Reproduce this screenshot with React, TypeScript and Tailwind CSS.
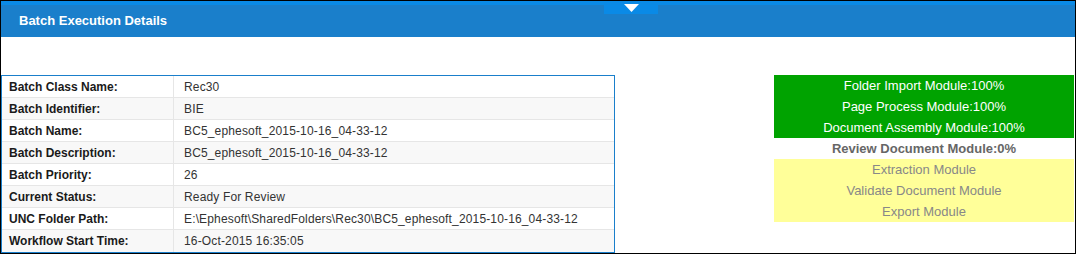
import React from 'react';

const details: [string, string][] = [
  ['Batch Class Name:', 'Rec30'],
  ['Batch Identifier:', 'BIE'],
  ['Batch Name:', 'BC5_ephesoft_2015-10-16_04-33-12'],
  ['Batch Description:', 'BC5_ephesoft_2015-10-16_04-33-12'],
  ['Batch Priority:', '26'],
  ['Current Status:', 'Ready For Review'],
  ['UNC Folder Path:', 'E:\\Ephesoft\\SharedFolders\\Rec30\\BC5_ephesoft_2015-10-16_04-33-12'],
  ['Workflow Start Time:', '16-Oct-2015 16:35:05'],
];

const done = ['Folder Import Module:100%', 'Page Process Module:100%', 'Document Assembly Module:100%'];
const pending = ['Extraction Module', 'Validate Document Module', 'Export Module'];

export default function App() {
  return (
    <div className="w-[1076px] h-[254px] border border-black bg-white flex flex-col font-['Liberation_Sans',Arial,sans-serif] overflow-hidden">
      <div className="relative h-[36px] shrink-0 bg-[#1a7fcb] border-t-4 border-[#0a8ae6] flex items-center pl-[18px]">
        <span className="text-white text-[13px] font-bold">Batch Execution Details</span>
        <div className="absolute left-[603px] -top-[4px] w-[54px] h-[13px] bg-[#0a8ae6] flex justify-center pt-[3px]">
          <svg width="15" height="8" viewBox="0 0 15 8">
            <polygon points="0,0 15,0 7.5,8" fill="#fff" />
          </svg>
        </div>
      </div>

      <div className="flex items-start pt-[38px]">
        <div className="w-[614px] border border-[#1a7fcb] text-[12px]">
          {details.map(([label, value], i) => (
            <div
              key={label}
              className={`flex h-[22px] ${i < details.length - 1 ? 'border-b border-[#e6e6e6]' : ''} ${i % 2 === 1 ? 'bg-[#f8f8f8]' : 'bg-white'}`}
            >
              <div className="w-[172px] shrink-0 border-r border-[#e6e6e6] pl-[7px] flex items-center font-bold text-[#1a1a1a]">
                {label}
              </div>
              <div className="pl-[10px] flex items-center text-[#333] tracking-[0.15px]">{value}</div>
            </div>
          ))}
        </div>

        <div className="ml-[159px] w-[300px] text-[13px] text-center">
          {done.map((m) => (
            <div key={m} className="h-[21px] leading-[21px] bg-[#00a300] text-white">
              {m}
            </div>
          ))}
          <div className="h-[21px] leading-[21px] font-bold text-[#666]">Review Document Module:0%</div>
          {pending.map((m) => (
            <div key={m} className="h-[21px] leading-[21px] bg-[#ffff99] text-[#888]">
              {m}
            </div>
          ))}
        </div>
      </div>
    </div>
  );
}
